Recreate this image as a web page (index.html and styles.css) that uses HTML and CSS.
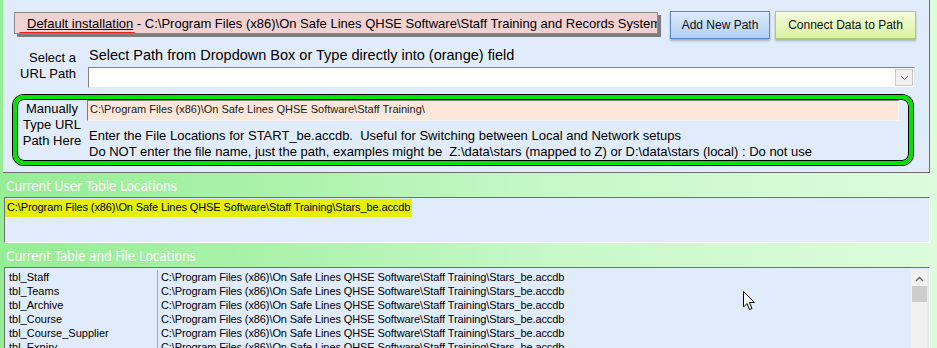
FILE: index.html
```html
<!DOCTYPE html>
<html lang="en">
<head>
    <meta charset="UTF-8">
    <title>Data Path Settings</title>
    <link rel="stylesheet" href="styles.css">
</head>
<body>
    <div class="screen">
        <!-- Top settings panel -->
        <div class="panel">
            <div class="top-row">
                <div class="current-path">
                    <span class="marked">Default installation</span> - C:\Program Files (x86)\On Safe Lines QHSE Software\Staff Training and Records System
                </div>
                <button class="btn btn-blue">Add New Path</button>
                <button class="btn btn-green">Connect Data to Path</button>
            </div>

            <div class="select-row">
                <div class="side-label">Select a<br>URL Path</div>
                <div class="select-body">
                    <div class="hint">Select Path from Dropdown Box or Type directly into (orange) field</div>
                    <div class="combo">
                        <span class="combo-btn">
                            <svg width="9" height="6" viewBox="0 0 9 6"><path d="M1 1 L4.5 4.5 L8 1" fill="none" stroke="#606060" stroke-width="1"/></svg>
                        </span>
                    </div>
                </div>
            </div>

            <div class="manual-box">
                <div class="manual-label">Manually<br>Type URL<br>Path Here</div>
                <div class="manual-body">
                    <div class="orange-field">C:\Program Files (x86)\On Safe Lines QHSE Software\Staff Training\</div>
                    <p>Enter the File Locations for START_be.accdb.&nbsp; Useful for Switching between Local and Network setups</p>
                    <p>Do NOT enter the file name, just the path, examples might be&nbsp; Z:\data\stars (mapped to Z) or D:\data\stars (local) : Do not use</p>
                </div>
            </div>
        </div>

        <!-- User table locations -->
        <div class="section-title">Current User Table Locations</div>
        <div class="list-box user-box">
            <span class="highlight">C:\Program Files (x86)\On Safe Lines QHSE Software\Staff Training\Stars_be.accdb</span>
        </div>

        <!-- Table and file locations -->
        <div class="section-title">Current Table and File Locations</div>
        <div class="list-box table-box">
            <div class="rows">
                <div class="row"><span class="col-name">tbl_Staff</span><span class="col-path">C:\Program Files (x86)\On Safe Lines QHSE Software\Staff Training\Stars_be.accdb</span></div>
                <div class="row"><span class="col-name">tbl_Teams</span><span class="col-path">C:\Program Files (x86)\On Safe Lines QHSE Software\Staff Training\Stars_be.accdb</span></div>
                <div class="row"><span class="col-name">tbl_Archive</span><span class="col-path">C:\Program Files (x86)\On Safe Lines QHSE Software\Staff Training\Stars_be.accdb</span></div>
                <div class="row"><span class="col-name">tbl_Course</span><span class="col-path">C:\Program Files (x86)\On Safe Lines QHSE Software\Staff Training\Stars_be.accdb</span></div>
                <div class="row"><span class="col-name">tbl_Course_Supplier</span><span class="col-path">C:\Program Files (x86)\On Safe Lines QHSE Software\Staff Training\Stars_be.accdb</span></div>
                <div class="row"><span class="col-name">tbl_Expiry</span><span class="col-path">C:\Program Files (x86)\On Safe Lines QHSE Software\Staff Training\Stars_be.accdb</span></div>
            </div>
            <div class="scrollbar">
                <svg class="arrow-up" width="9" height="6" viewBox="0 0 9 6"><path d="M1 5 L4.5 1.5 L8 5" fill="none" stroke="#606060" stroke-width="1.3"/></svg>
                <div class="thumb"></div>
            </div>
        </div>

        <!-- mouse pointer lying over the list -->
        <svg class="cursor" width="13" height="20" viewBox="0 0 13 20">
            <path d="M0.5 0.5 L0.5 16 L4 12.5 L6.5 18.5 L9 17.5 L6.5 11.5 L11.5 11.5 Z" fill="#fff" stroke="#000" stroke-width="1"/>
        </svg>
    </div>
</body>
</html>
```

FILE: styles.css
```css
/* Global */
html, body {
    margin: 0;
    padding: 0;
    overflow: hidden;
}

body {
    font-family: 'Liberation Sans', Arial, sans-serif;
    color: #000;
}

.screen {
    position: relative;
    width: 937px;
    height: 348px;
    background: linear-gradient(90deg, #94ee94 0%, #acf2ac 30%, #c8f8c8 60%, #dcfcdc 100%);
    overflow: hidden;
}

/* Top panel */
.panel {
    margin-left: 3px;
    width: 926px;
    height: 172px;
    background: #e0ecfc;
    border-right: 1px solid #6e6e6e;
    border-bottom: 1px solid #6e6e6e;
}

.top-row {
    display: flex;
    align-items: flex-start;
    padding: 11px 0 0 11px;
    height: 27px;
}

.current-path {
    width: 644px;
    height: 22px;
    margin-top: 1px;
    background: #f0d2d2;
    border: 1px solid #8c8c8c;
    box-shadow: 3px 3px 0 #7c7c7c;
    font-size: 13px;
    line-height: 21px;
    padding-left: 12px;
    box-sizing: border-box;
    white-space: nowrap;
    overflow: hidden;
}

.marked {
    text-decoration: underline;
    position: relative;
}

.marked::after {
    content: "";
    position: absolute;
    left: -8px;
    right: -2px;
    bottom: -4px;
    height: 3px;
    border-radius: 2px;
    background: #ee1c1c;
}

.btn {
    height: 28px;
    font-family: 'Liberation Sans', Arial, sans-serif;
    font-size: 12px;
    color: #101010;
    padding: 0;
    box-shadow: 0 2px 2px rgba(0, 0, 0, 0.25);
}

.btn-blue {
    width: 100px;
    margin-left: 12px;
    background: linear-gradient(#dce9fd, #b2cef6);
    border: 1px solid #5d88c8;
}

.btn-green {
    width: 141px;
    margin-left: 5px;
    background: linear-gradient(#f4fbdc, #d9f3a0);
    border: 1px solid #aacd72;
}

/* Select row */
.select-row {
    display: flex;
    margin-top: 9px;
}

.side-label {
    width: 73px;
    text-align: right;
    font-size: 13px;
    line-height: 16px;
    padding-top: 3px;
}

.select-body {
    margin-left: 12px;
}

.hint {
    font-size: 14.5px;
    line-height: 16px;
    margin-left: 1px;
}

.combo {
    width: 825px;
    height: 19px;
    margin-top: 4px;
    background: #fff;
    border-top: 1px solid #828282;
    border-left: 1px solid #828282;
    border-right: 1px solid #e8e8e8;
    border-bottom: 1px solid #e8e8e8;
    display: flex;
    justify-content: flex-end;
    align-items: stretch;
}

.combo-btn {
    width: 16px;
    margin: 1px;
    background: #f0f0f0;
    border: 1px solid #c8c8c8;
    display: flex;
    align-items: center;
    justify-content: center;
}

/* Green outlined box */
.manual-box {
    display: flex;
    margin: 7px 0 0 10px;
    width: 900px;
    height: 70px;
    box-sizing: border-box;
    border: 4px solid #00e400;
    border-radius: 11px;
    box-shadow: 0 0 0 1px #000, inset 0 0 0 1px #000;
}

.manual-label {
    width: 70px;
    text-align: center;
    font-size: 13px;
    line-height: 16px;
    padding-top: 2px;
}

.manual-body {
    flex: 1;
    padding-top: 1px;
}

.orange-field {
    width: 812px;
    height: 21px;
    box-sizing: border-box;
    background: #fde7da;
    border-top: 1px solid #7e7e7e;
    border-left: 1px solid #7e7e7e;
    border-right: 1px solid #f4f4f4;
    border-bottom: 1px solid #f4f4f4;
    font-size: 11px;
    line-height: 17px;
    padding-left: 2px;
    color: #1a1a1a;
}

.manual-body p {
    margin: 0;
    font-size: 13px;
    line-height: 16px;
    padding-left: 2px;
}

.manual-body p:first-of-type {
    margin-top: 7px;
}

/* Lower sections */
.section-title {
    color: #ffffff;
    font-size: 13.5px;
    height: 24px;
    line-height: 17px;
    padding-top: 5px;
    box-sizing: border-box;
    padding-left: 6px;
    font-family: 'DejaVu Sans Condensed', 'DejaVu Sans', sans-serif;
    letter-spacing: -0.1px;
}

.list-box {
    margin-left: 4px;
    width: 926px;
    box-sizing: border-box;
    background: #e0ecfc;
    border-top: 1px solid #707070;
    border-left: 1px solid #707070;
    border-right: 1px solid #ffffff;
    border-bottom: 1px solid #ffffff;
    font-size: 11px;
}

.user-box {
    height: 46px;
    padding: 1px 0 0 0;
}

.highlight {
    display: inline-block;
    background: #e4f000;
    padding: 2px 2px 3px 2px;
    line-height: 13px;
    letter-spacing: -0.1px;
}

.table-box {
    height: 90px;
    display: flex;
    justify-content: space-between;
}

.rows {
    padding-top: 2px;
}

.row {
    display: flex;
    height: 14px;
    line-height: 14px;
}

.col-name {
    width: 148px;
    padding-left: 4px;
    border-right: 1px solid #a8a8a8;
}

.col-path {
    padding-left: 3px;
    letter-spacing: -0.1px;
}

.scrollbar {
    width: 16px;
    margin-right: 2px;
    margin-top: 2px;
    background: #f0f0f0;
    display: flex;
    flex-direction: column;
    align-items: center;
}

.arrow-up {
    margin-top: 6px;
}

.thumb {
    width: 15px;
    height: 16px;
    margin-top: 4px;
    background: #cdcdcd;
}

.cursor {
    position: absolute;
    left: 743px;
    top: 291px;
}
```
